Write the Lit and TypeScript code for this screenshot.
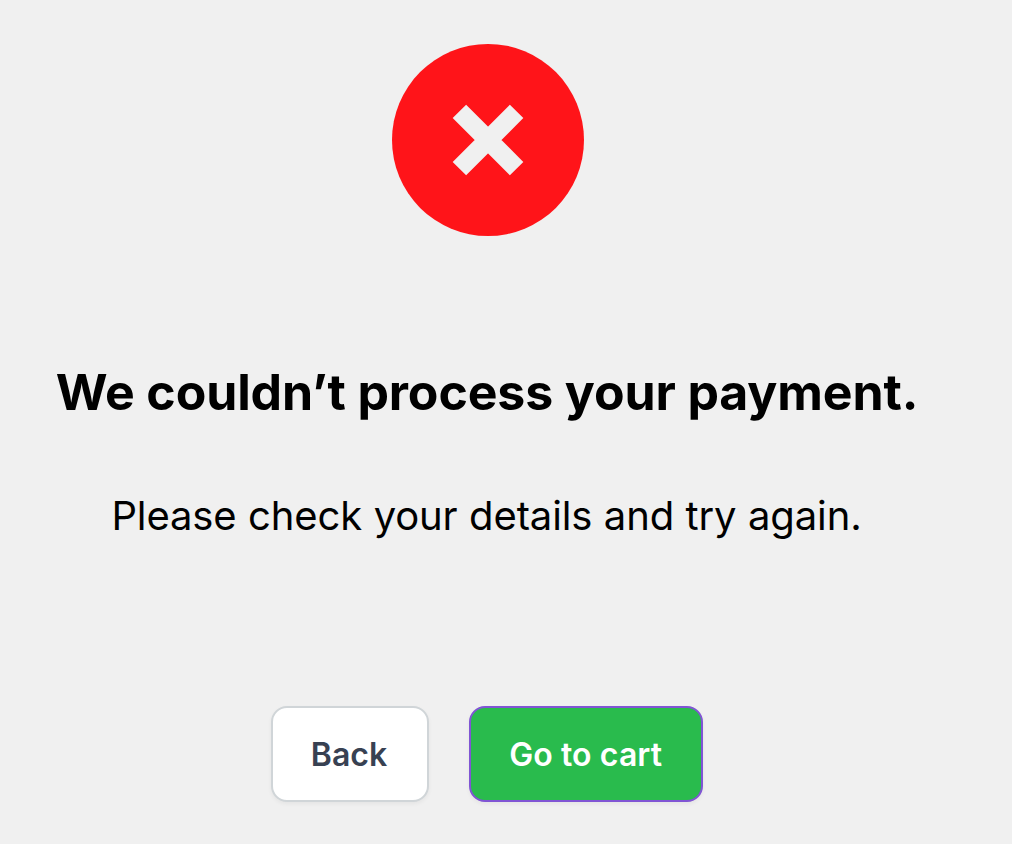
import { LitElement, html, css, svg } from "lit";
import { customElement, property } from "lit/decorators.js";

const errorIcon = svg`<svg viewBox="0 0 192 192" aria-hidden="true">
	<circle cx="96" cy="96" r="96" fill="#ff1419" />
	<path d="M67.4 67.4L124.6 124.6M124.6 67.4L67.4 124.6" fill="none" stroke="#f0f0f0" stroke-width="19" />
</svg>`;

@customElement("action-button")
export class ActionButton extends LitElement {
	@property({ type: Boolean, reflect: true }) primary = false;

	render() {
		return html`<button type="button"><slot></slot></button>`;
	}

	static styles = css`
		:host {
			display: block;
		}

		button {
			display: block;
			box-sizing: border-box;
			height: 96px;
			padding: 2px 40px 0 38px;
			border: 2px solid #d0d5d8;
			border-radius: 16px;
			background: #fff;
			color: #384152;
			font: 600 32px/48px Inter, sans-serif;
			white-space: nowrap;
			box-shadow: 0 2px 4px rgba(0, 0, 0, 0.05);
			cursor: pointer;
		}

		:host([primary]) button {
			padding-right: 39px;
			border-color: #8055d4;
			background: #29bb4d;
			color: #fff;
			letter-spacing: 0.1px;
		}
	`;
}

@customElement("app-root")
export class AppRoot extends LitElement {
	render() {
		return html`
			<main>
				<div class="icon">${errorIcon}</div>
				<h1>We couldn’t process your payment.</h1>
				<p>Please check your details and try again.</p>
				<div class="actions">
					<action-button>Back</action-button>
					<action-button primary>Go to cart</action-button>
				</div>
			</main>
		`;
	}

	static styles = css`
		:host {
			display: block;
			height: 844px;
			overflow: hidden;
			background: #f0f0f0;
			color: #000;
			font-family: Inter, sans-serif;
		}

		main {
			display: flex;
			flex-direction: column;
			align-items: center;
			padding: 44px 38px 0 0;
		}

		.icon,
		.icon svg {
			display: block;
			width: 192px;
			height: 192px;
		}

		.icon {
			padding-left: 2px;
		}

		h1 {
			margin: 124px 0 0;
			font-size: 50px;
			font-weight: 700;
			line-height: 64px;
			letter-spacing: -0.12px;
			white-space: nowrap;
		}

		p {
			margin: 64px 0 0;
			padding-right: 1px;
			font-size: 40px;
			font-weight: 400;
			line-height: 56px;
			letter-spacing: -0.12px;
			word-spacing: 0.4px;
			white-space: nowrap;
		}

		.actions {
			display: flex;
			gap: 40px;
			margin-top: 162px;
		}
	`;
}
